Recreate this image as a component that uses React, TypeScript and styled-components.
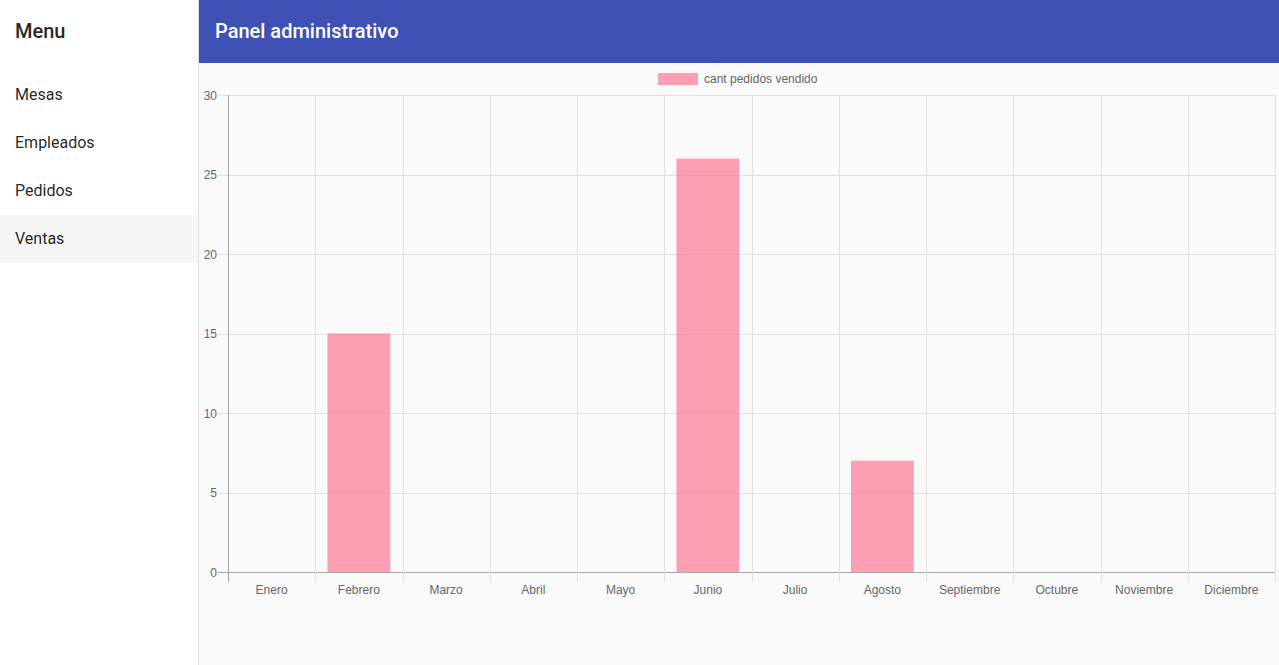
import { createGlobalStyle, styled } from "styled-components";

const GlobalStyle = createGlobalStyle`
  html, body { margin: 0; padding: 0; }
  body {
    font-family: Roboto, "Liberation Sans", sans-serif;
    background: #fafafa;
    color: rgba(0, 0, 0, 0.87);
  }
`;

const menu = ["Mesas", "Empleados", "Pedidos", "Ventas"];
const months = [
  "Enero",
  "Febrero",
  "Marzo",
  "Abril",
  "Mayo",
  "Junio",
  "Julio",
  "Agosto",
  "Septiembre",
  "Octubre",
  "Noviembre",
  "Diciembre",
];
const ventas = [0, 15, 0, 0, 0, 26, 0, 7, 0, 0, 0, 0];

// chart geometry, in svg coordinates
const left = 29;
const right = 1076;
const top = 32;
const bottom = 509;
const max = 30;
const colW = (right - left) / 12;
const yOf = (v: number) => bottom - (v / max) * (bottom - top);

const App = () => {
  return (
    <Layout>
      <GlobalStyle />
      <Sidebar>
        <SideTitle>Menu</SideTitle>
        <MenuList>
          {menu.map((m) => (
            <MenuItem key={m} $active={m === "Ventas"}>
              {m}
            </MenuItem>
          ))}
        </MenuList>
      </Sidebar>
      <Main>
        <Header>Panel administrativo</Header>
        <ChartWrap>
          <svg width="1080" height="545" viewBox="0 0 1080 545">
            <rect x="459" y="10" width="40" height="12" fill="rgba(255,99,132,0.6)" />
            <ChartText x="505" y="20">
              cant pedidos vendido
            </ChartText>

            {[0, 5, 10, 15, 20, 25, 30].map((v) => (
              <g key={v}>
                <line
                  x1={19}
                  x2={right}
                  y1={Math.round(yOf(v)) + 0.5}
                  y2={Math.round(yOf(v)) + 0.5}
                  stroke={v === 0 ? "#a6a6a6" : "#e1e1e1"}
                />
                <ChartText x="18" y={yOf(v) + 4.5} textAnchor="end">
                  {v}
                </ChartText>
              </g>
            ))}

            {Array.from({ length: 13 }).map((_, i) => {
              const x = Math.round(left + i * colW) + 0.5;
              return (
                <line
                  key={i}
                  x1={x}
                  x2={x}
                  y1={top}
                  y2={bottom + 10}
                  stroke={i === 0 ? "#a6a6a6" : "#e1e1e1"}
                />
              );
            })}

            {ventas.map((v, i) => {
              if (!v) return null;
              const w = colW * 0.72;
              const cx = left + (i + 0.5) * colW;
              return (
                <rect
                  key={i}
                  x={cx - w / 2}
                  y={yOf(v)}
                  width={w}
                  height={bottom - yOf(v)}
                  fill="rgba(255,99,132,0.6)"
                />
              );
            })}

            {months.map((m, i) => (
              <ChartText
                key={m}
                x={left + (i + 0.5) * colW}
                y="531"
                textAnchor="middle"
              >
                {m}
              </ChartText>
            ))}
          </svg>
        </ChartWrap>
      </Main>
    </Layout>
  );
};

export default App;

const Layout = styled.div`
  display: flex;
  min-height: 100vh;
`;

const Sidebar = styled.nav`
  width: 198px;
  flex-shrink: 0;
  background: #fff;
  border-right: 1px solid rgba(0, 0, 0, 0.12);
`;

const SideTitle = styled.div`
  height: 63px;
  box-sizing: border-box;
  display: flex;
  align-items: center;
  padding: 0 15px 2px;
  font-size: 20px;
  font-weight: 500;
`;

const MenuList = styled.ul`
  list-style: none;
  margin: 0;
  padding: 8px 0;
`;

const MenuItem = styled.li<{ $active?: boolean }>`
  height: 48px;
  box-sizing: border-box;
  display: flex;
  align-items: center;
  padding: 0 15px 2px;
  font-size: 16px;
  background: ${(p) => (p.$active ? "#f5f5f5" : "transparent")};
`;

const Main = styled.main`
  flex: 1;
  display: flex;
  flex-direction: column;
  background: #fafafa;
`;

const Header = styled.header`
  height: 63px;
  box-sizing: border-box;
  display: flex;
  align-items: center;
  padding: 0 16px 2px;
  background: #3f51b5;
  color: #fff;
  font-size: 20px;
  font-weight: 500;
`;

const ChartWrap = styled.div`
  display: flex;
`;

const ChartText = styled.text`
  font-family: "Liberation Sans", Arial, sans-serif;
  font-size: 12px;
  fill: #666;
`;
